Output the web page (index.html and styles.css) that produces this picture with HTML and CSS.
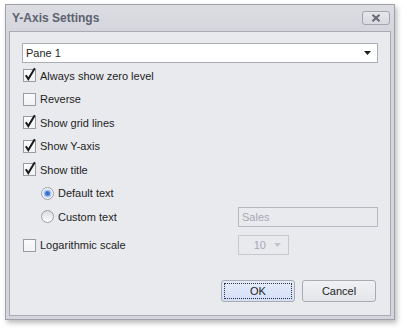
FILE: index.html
```html
<!DOCTYPE html>
<html>
<head>
<meta charset="utf-8">
<link rel="stylesheet" href="styles.css">
</head>
<body>
<div class="window">
  <div class="titlebar">
    <span class="title">Y-Axis Settings</span>
    <span class="close">
      <svg width="10" height="8" viewBox="0 0 10 8"><path d="M1.5 0.8 L8.5 7.2 M8.5 0.8 L1.5 7.2" stroke="#6b6c78" stroke-width="2.2" fill="none"/></svg>
    </span>
  </div>
  <div class="content">
    <div class="combo">
      <span>Pane 1</span>
      <svg class="arrow" width="7" height="4" viewBox="0 0 7 4"><path d="M0 0 H7 L3.5 4 Z" fill="#1e1e1e"/></svg>
    </div>
    <div class="rows">
      <div class="row"><span class="cb checked"><svg width="14" height="15" viewBox="0 0 14 15"><path d="M2.8 8.2 L5.3 12 L11.8 1.2" stroke="#1b1b1b" stroke-width="2" fill="none"/></svg></span><span>Always show zero level</span></div>
      <div class="row"><span class="cb"></span><span>Reverse</span></div>
      <div class="row"><span class="cb checked"><svg width="14" height="15" viewBox="0 0 14 15"><path d="M2.8 8.2 L5.3 12 L11.8 1.2" stroke="#1b1b1b" stroke-width="2" fill="none"/></svg></span><span>Show grid lines</span></div>
      <div class="row"><span class="cb checked"><svg width="14" height="15" viewBox="0 0 14 15"><path d="M2.8 8.2 L5.3 12 L11.8 1.2" stroke="#1b1b1b" stroke-width="2" fill="none"/></svg></span><span>Show Y-axis</span></div>
      <div class="row"><span class="cb checked"><svg width="14" height="15" viewBox="0 0 14 15"><path d="M2.8 8.2 L5.3 12 L11.8 1.2" stroke="#1b1b1b" stroke-width="2" fill="none"/></svg></span><span>Show title</span></div>
      <div class="row sub"><span class="radio on"><svg width="13" height="13" viewBox="0 0 13 13"><defs><radialGradient id="rb" cx="50%" cy="40%" r="60%"><stop offset="0" stop-color="#2a5fbf"/><stop offset="1" stop-color="#5d8fe0"/></radialGradient></defs><circle cx="6.5" cy="6.5" r="6" fill="#f4f5f7" stroke="#9c9ea6"/><circle cx="6.5" cy="6.5" r="4" fill="#a9c6f2"/><circle cx="6.5" cy="6.5" r="2.6" fill="url(#rb)"/></svg></span><span>Default text</span></div>
      <div class="row sub"><span class="radio"><svg width="13" height="13" viewBox="0 0 13 13"><defs><linearGradient id="rg" x1="0" y1="0" x2="0" y2="1"><stop offset="0" stop-color="#d9dadf"/><stop offset="1" stop-color="#ffffff"/></linearGradient></defs><circle cx="6.5" cy="6.5" r="6" fill="url(#rg)" stroke="#9c9ea6"/></svg></span><span>Custom text</span><span class="right"><span class="textbox">Sales</span></span></div>
      <div class="row log"><span class="cb"></span><span>Logarithmic scale</span><span class="right"><span class="spin"><span>10</span><svg width="7" height="4" viewBox="0 0 7 4"><path d="M0 0 H7 L3.5 4 Z" fill="#c2c3ca"/></svg></span></span></div>
    </div>
    <div class="buttons">
      <button class="btn ok"><span class="focus">OK</span></button>
      <button class="btn">Cancel</button>
    </div>
  </div>
</div>
</body>
</html>
```
FILE: styles.css
```css
html, body {
  margin: 0;
  padding: 0;
  background: #ffffff;
}
body {
  width: 406px;
  height: 332px;
  overflow: hidden;
  font-family: "Liberation Sans", Arial, sans-serif;
  font-size: 11px;
  color: #1e1e1e;
}
.window {
  margin: 4px 0 0 5px;
  width: 390px;
  height: 316px;
  box-sizing: border-box;
  border: 1px solid #9fa0aa;
  background: linear-gradient(#dcdde2, #d4d5db 30px, #d4d5db);
  box-shadow: 2px 3px 5px rgba(60, 60, 70, 0.35);
  display: flex;
  flex-direction: column;
  padding: 0 3px 3px 3px;
}
.titlebar {
  height: 26px;
  flex: none;
  display: flex;
  align-items: flex-start;
  justify-content: space-between;
  padding: 0 1px 0 3px;
}
.title {
  margin-top: 6px;
  font-weight: bold;
  font-size: 12px;
  color: #5d6170;
}
.close {
  margin-top: 6px;
  width: 26px;
  height: 12px;
  border: 1px solid #a3a4ae;
  border-radius: 3px;
  background: linear-gradient(#e6e7eb, #d9dadf);
  display: flex;
  align-items: center;
  justify-content: center;
}
.content {
  flex: 1;
  border: 1px solid #a9aab3;
  background: #e9eaee;
  display: flex;
  flex-direction: column;
  padding: 11px 12px 13px 12px;
}
.combo {
  height: 20px;
  box-sizing: border-box;
  border: 1px solid #abacb4;
  background: #ffffff;
  display: flex;
  align-items: center;
  justify-content: space-between;
  padding: 0 6px 0 3px;
}
.arrow {
  display: block;
}
.rows {
  display: flex;
  flex-direction: column;
  margin-top: 1px;
}
.row {
  height: 23.5px;
  display: flex;
  align-items: center;
  gap: 4px;
}
.row.sub {
  padding-left: 19px;
}
.row.log {
  margin-top: 5px;
}
.cb {
  position: relative;
  width: 13px;
  height: 13px;
  box-sizing: border-box;
  border: 1px solid #9a9ba3;
  background: linear-gradient(#fbfbfc, #f1f2f4);
  flex: none;
  margin-left: 1px;
}
.cb svg {
  position: absolute;
  left: -1px;
  top: -3px;
}
.radio {
  width: 13px;
  height: 13px;
  flex: none;
  display: block;
}
.radio svg {
  display: block;
}
.right {
  margin-left: auto;
  width: 140px;
  display: flex;
}
.textbox {
  width: 140px;
  height: 20px;
  box-sizing: border-box;
  border: 1px solid #b8b9c0;
  background: #e9eaee;
  color: #a6a7b2;
  padding: 0 3px;
  display: flex;
  align-items: center;
}
.spin {
  width: 51px;
  height: 20px;
  box-sizing: border-box;
  border: 1px solid #c8c9cf;
  background: #e9eaee;
  color: #a6a7b2;
  display: flex;
  align-items: center;
  justify-content: flex-end;
  gap: 8px;
  padding-right: 7px;
}
.buttons {
  margin-top: auto;
  display: flex;
  justify-content: flex-end;
  gap: 7px;
  padding-right: 2px;
}
.btn {
  width: 74px;
  height: 22px;
  box-sizing: border-box;
  border: 1px solid #a9aab3;
  border-radius: 3px;
  background: linear-gradient(#f0f1f3, #e4e5e9);
  font-family: "Liberation Sans", Arial, sans-serif;
  font-size: 11px;
  color: #1e1e1e;
  padding: 0;
  display: flex;
  align-items: center;
  justify-content: center;
}
.btn.ok {
  background: linear-gradient(#e4ecfb, #d3def7);
  padding: 2px;
}
.focus {
  flex: 1;
  align-self: stretch;
  border: 1px dotted #333;
  display: flex;
  align-items: center;
  justify-content: center;
}
```
